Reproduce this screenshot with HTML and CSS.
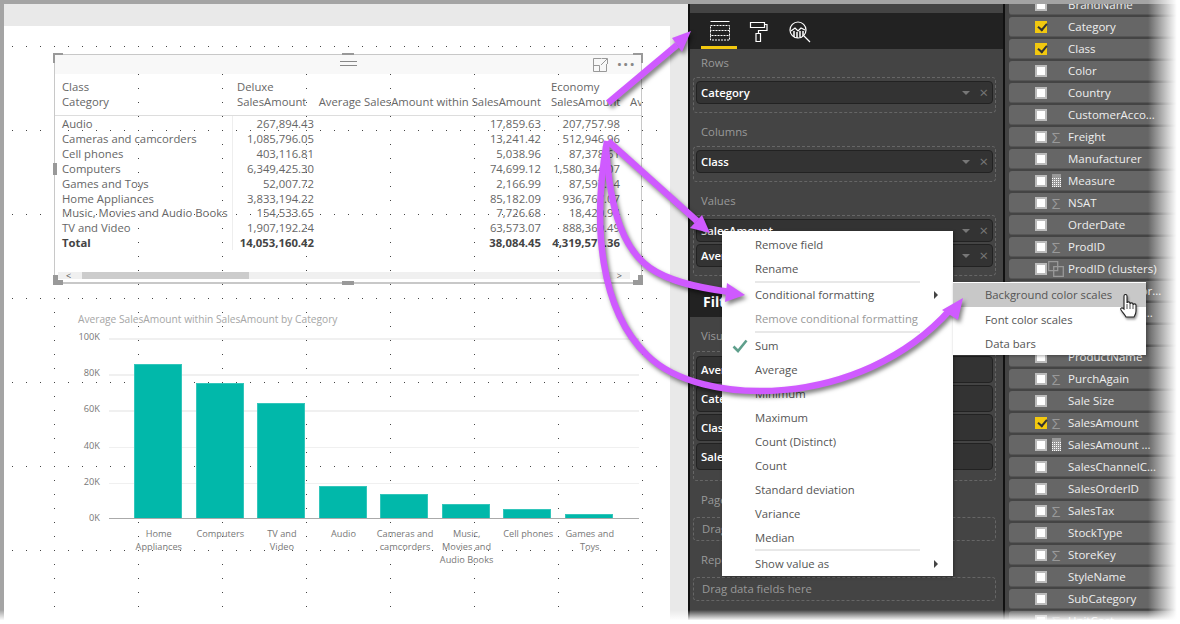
FILE: index.html
```html
<!DOCTYPE html>
<html lang="en">
<head>
    <meta charset="UTF-8">
    <title>Conditional formatting</title>
    <link rel="stylesheet" href="styles.css">
</head>
<body>
    <div class="frame">
        <div class="canvas">
            <div class="page">
                <div class="page-grid">
                    <div class="table-visual">
                        <span class="handle handle-tl"></span>
                        <span class="handle handle-tr"></span>
                        <span class="handle handle-bl"></span>
                        <span class="handle handle-br"></span>
                        <span class="handle handle-top"></span>
                        <span class="handle handle-left"></span>
                        <span class="handle handle-bottom"></span>
                        <div class="visual-header">
                            <span class="drag-lines"></span>
                            <svg class="focus-icon" width="15" height="14" viewBox="0 0 15 14">
                                <path d="M8.5 .5H.5v13h13V6M.5 7.5h6v6M9 .5h5.5V6M14 1 8 7" fill="none" stroke="#999"/>
                            </svg>
                            <span class="more-dots">&middot;&middot;&middot;</span>
                        </div>
                        <div class="table-clip">
                            <table class="matrix">
                                <thead>
                                    <tr>
                                        <th class="col-name">Class<br>Category</th>
                                        <th class="col-deluxe">Deluxe<br>SalesAmount</th>
                                        <th class="col-avg">Average SalesAmount within SalesAmount</th>
                                        <th class="col-economy">Economy<br>SalesAmount</th>
                                        <th class="col-next">Average</th>
                                    </tr>
                                </thead>
                                <tbody>
                                    <tr><td>Audio</td><td>267,894.43</td><td>17,859.63</td><td>207,757.98</td><td></td></tr>
                                    <tr><td>Cameras and camcorders</td><td>1,085,796.05</td><td>13,241.42</td><td>512,946.96</td><td></td></tr>
                                    <tr><td>Cell phones</td><td>403,116.81</td><td>5,038.96</td><td>87,378.61</td><td></td></tr>
                                    <tr><td>Computers</td><td>6,349,425.30</td><td>74,699.12</td><td>1,580,344.07</td><td></td></tr>
                                    <tr><td>Games and Toys</td><td>52,007.72</td><td>2,166.99</td><td>87,597.14</td><td></td></tr>
                                    <tr><td>Home Appliances</td><td>3,833,194.22</td><td>85,182.09</td><td>936,767.07</td><td></td></tr>
                                    <tr class="row-tight"><td>Music, Movies and Audio Books</td><td>154,533.65</td><td>7,726.68</td><td>18,420.94</td><td></td></tr>
                                    <tr><td>TV and Video</td><td>1,907,192.24</td><td>63,573.07</td><td>888,360.49</td><td></td></tr>
                                    <tr class="total"><td>Total</td><td>14,053,160.42</td><td>38,084.45</td><td>4,319,571.36</td><td></td></tr>
                                </tbody>
                            </table>
                        </div>
                        <div class="scrollbar">
                            <span class="scroll-arrow">&lt;</span>
                            <span class="scroll-thumb"></span>
                            <span class="scroll-arrow scroll-arrow-right">&gt;</span>
                        </div>
                    </div>

                    <div class="chart">
                        <div class="chart-title">Average SalesAmount within SalesAmount by Category</div>
                        <div class="chart-body">
                            <div class="y-axis">
                                <span>100K</span><span>80K</span><span>60K</span><span>40K</span><span>20K</span><span>0K</span>
                            </div>
                            <div class="plot">
                                <div class="bar" style="height: 154px"></div>
                                <div class="bar" style="height: 135px"></div>
                                <div class="bar" style="height: 115px"></div>
                                <div class="bar" style="height: 32px"></div>
                                <div class="bar" style="height: 24px"></div>
                                <div class="bar" style="height: 14px"></div>
                                <div class="bar" style="height: 9px"></div>
                                <div class="bar" style="height: 4px"></div>
                            </div>
                        </div>
                        <div class="x-axis">
                            <span>Home<br>Appliances</span>
                            <span>Computers</span>
                            <span>TV and<br>Video</span>
                            <span>Audio</span>
                            <span>Cameras and<br>camcorders</span>
                            <span>Music,<br>Movies and<br>Audio Books</span>
                            <span>Cell phones</span>
                            <span>Games and<br>Toys</span>
                        </div>
                    </div>
                </div>
            </div>
        </div>

        <div class="viz-panel">
            <div class="tab-bar">
                <div class="tab tab-active">
                    <svg width="22" height="20" viewBox="0 0 22 20" fill="none" stroke="#fff">
                        <path d="M1.5 .5h19"/>
                        <path d="M1.5 4.5h19v5h-19zM1.5 9.5v5h19v-5M1.5 14.5v4.5h19v-4.5" stroke-dasharray="2 1"/>
                    </svg>
                </div>
                <div class="tab">
                    <svg width="20" height="21" viewBox="0 0 20 21" fill="none" stroke="#fff" stroke-width="1.2">
                        <path d="M1.5 1.5h14v5h-14zM15.500 3.500h2.500v6H9.500v3M7 12.500h4.500v8H7z"/>
                    </svg>
                </div>
                <div class="tab">
                    <svg width="22" height="22" viewBox="0 0 22 22" fill="none" stroke="#fff" stroke-width="1.2">
                        <circle cx="9" cy="9" r="8"/>
                        <path d="M15 15l6 6M2 10l4-3 3 3 3-3 4 2"/>
                        <path d="M5 10v6M8 11v6M11 10v6M14 10v5" stroke-width="1.500"/>
                    </svg>
                </div>
            </div>

            <div class="well-label">Rows</div>
            <div class="well">
                <div class="pill">Category<span class="pill-caret"></span><span class="pill-close">&times;</span></div>
            </div>

            <div class="well-label">Columns</div>
            <div class="well">
                <div class="pill">Class<span class="pill-caret"></span><span class="pill-close">&times;</span></div>
            </div>

            <div class="well-label">Values</div>
            <div class="well">
                <div class="pill">SalesAmount<span class="pill-caret"></span><span class="pill-close">&times;</span></div>
                <div class="pill">Average SalesAmount<span class="pill-caret"></span><span class="pill-close">&times;</span></div>
            </div>

            <div class="filters-header">Filters</div>

            <div class="well-label well-label-tight">Visual level filters</div>
            <div class="well well-filters">
                <div class="pill pill-tall">Average SalesAmount</div>
                <div class="pill pill-tall">Category</div>
                <div class="pill pill-tall">Class</div>
                <div class="pill pill-tall">SalesAmount</div>
            </div>

            <div class="well-label">Page level filters</div>
            <div class="well well-empty">Drag data fields here</div>

            <div class="well-label">Report level filters</div>
            <div class="well well-empty">Drag data fields here</div>
        </div>

        <div class="fields-panel">
            <div class="field"><span class="check"></span><span class="field-icon"></span><span class="field-name">BrandName</span></div>
            <div class="field"><span class="check checked"></span><span class="field-icon"></span><span class="field-name">Category</span></div>
            <div class="field"><span class="check checked"></span><span class="field-icon"></span><span class="field-name">Class</span></div>
            <div class="field"><span class="check"></span><span class="field-icon"></span><span class="field-name">Color</span></div>
            <div class="field"><span class="check"></span><span class="field-icon"></span><span class="field-name">Country</span></div>
            <div class="field"><span class="check"></span><span class="field-icon"></span><span class="field-name">CustomerAcco...</span></div>
            <div class="field"><span class="check"></span><span class="field-icon sigma">&Sigma;</span><span class="field-name">Freight</span></div>
            <div class="field"><span class="check"></span><span class="field-icon"></span><span class="field-name">Manufacturer</span></div>
            <div class="field"><span class="check"></span><span class="field-icon"><span class="calc"></span></span><span class="field-name">Measure</span></div>
            <div class="field"><span class="check"></span><span class="field-icon sigma">&Sigma;</span><span class="field-name">NSAT</span></div>
            <div class="field"><span class="check"></span><span class="field-icon"></span><span class="field-name">OrderDate</span></div>
            <div class="field"><span class="check"></span><span class="field-icon sigma">&Sigma;</span><span class="field-name">ProdID</span></div>
            <div class="field"><span class="check"></span><span class="field-icon">
                <svg width="16" height="16" viewBox="0 0 16 16" fill="none" stroke="#999" stroke-width="1.300"><path d="M.7 .7h9v9h-9zM5.700 5.700h9.600v9.600H5.700z"/></svg>
            </span><span class="field-name">ProdID (clusters)</span></div>
            <div class="field"><span class="check"></span><span class="field-icon"></span><span class="field-name">ProductCategor...</span></div>
            <div class="field"><span class="check"></span><span class="field-icon sigma">&Sigma;</span><span class="field-name">ProductDescri...</span></div>
            <div class="field"><span class="check"></span><span class="field-icon"></span><span class="field-name">ProductKey</span></div>
            <div class="field"><span class="check"></span><span class="field-icon"></span><span class="field-name">ProductName</span></div>
            <div class="field"><span class="check"></span><span class="field-icon sigma">&Sigma;</span><span class="field-name">PurchAgain</span></div>
            <div class="field"><span class="check"></span><span class="field-icon"></span><span class="field-name">Sale Size</span></div>
            <div class="field"><span class="check checked"></span><span class="field-icon sigma">&Sigma;</span><span class="field-name">SalesAmount</span></div>
            <div class="field"><span class="check"></span><span class="field-icon"><span class="calc"></span></span><span class="field-name">SalesAmount ...</span></div>
            <div class="field"><span class="check"></span><span class="field-icon"></span><span class="field-name">SalesChannelC...</span></div>
            <div class="field"><span class="check"></span><span class="field-icon"></span><span class="field-name">SalesOrderID</span></div>
            <div class="field"><span class="check"></span><span class="field-icon sigma">&Sigma;</span><span class="field-name">SalesTax</span></div>
            <div class="field"><span class="check"></span><span class="field-icon"></span><span class="field-name">StockType</span></div>
            <div class="field"><span class="check"></span><span class="field-icon sigma">&Sigma;</span><span class="field-name">StoreKey</span></div>
            <div class="field"><span class="check"></span><span class="field-icon"></span><span class="field-name">StyleName</span></div>
            <div class="field"><span class="check"></span><span class="field-icon"></span><span class="field-name">SubCategory</span></div>
            <div class="field"><span class="check"></span><span class="field-icon sigma">&Sigma;</span><span class="field-name">UnitCost</span></div>
        </div>
    </div>

    <!-- context menu -->
    <div class="menu">
        <div class="menu-item">Remove field</div>
        <div class="menu-item">Rename</div>
        <div class="menu-sep"></div>
        <div class="menu-item">Conditional formatting<span class="menu-more"></span></div>
        <div class="menu-item menu-item-off">Remove conditional formatting</div>
        <div class="menu-sep menu-sep-gap"></div>
        <div class="menu-item menu-item-checked">
            <svg class="menu-check" width="16" height="14" viewBox="0 0 16 14"><path d="M1.500 7.500 6 12 14.500 1.500" fill="none" stroke="#5f9f8c" stroke-width="2.600"/></svg>Sum
        </div>
        <div class="menu-item">Average</div>
        <div class="menu-item">Minimum</div>
        <div class="menu-item">Maximum</div>
        <div class="menu-item">Count (Distinct)</div>
        <div class="menu-item">Count</div>
        <div class="menu-item">Standard deviation</div>
        <div class="menu-item">Variance</div>
        <div class="menu-item">Median</div>
        <div class="menu-sep menu-sep-last"></div>
        <div class="menu-item">Show value as<span class="menu-more"></span></div>
    </div>

    <div class="submenu">
        <div class="menu-item menu-item-hover">Background color scales</div>
        <div class="menu-item">Font color scales</div>
        <div class="menu-item">Data bars</div>
    </div>

    <!-- callout arrows drawn over the screenshot -->
    <svg class="arrows" width="1180" height="624" viewBox="0 0 1180 624">
        <g fill="none" stroke="#cf5aff" stroke-width="6.500">
            <path d="M608 103 677 45"/>
            <path d="M608 141 697 221"/>
            <path d="M606 146C610 215 625 250 650 268 670 282 700 288 730 292"/>
            <path d="M607 141C592 225 600 310 647 355 700 408 860 410 950 310"/>
        </g>
        <g fill="#cf5aff">
            <path d="M691 31 672 38 682 52z"/>
            <path d="M710 233 690 228 702 215z"/>
            <path d="M745 295 727 283 725 302z"/>
            <path d="M963 298 942 310 958 320z"/>
        </g>
    </svg>

    <svg class="hand" width="22" height="28" viewBox="0 0 22 28">
        <path d="M6 2c0-2 3-2 3 0v7c0-1.500 3-1.500 3 0v1c0-1.500 3-1.500 3 0v1c0-1.500 3-1.500 3 0v6c0 3-1 4-2 6H8c-1-2-3-4-5-7-1-2 1-3 3-1z" fill="#fff" stroke="#222" stroke-width="1.100"/>
        <path d="M9 10v5M12 10v5M15 11v4" stroke="#222" fill="none" stroke-width=".8"/>
    </svg>

    <div class="fade fade-right"></div>
    <div class="fade fade-bottom"></div>
</body>
</html>
```
FILE: styles.css
```css
* {
    box-sizing: border-box;
}

body {
    margin: 0;
    width: 1180px;
    height: 624px;
    position: relative;
    overflow: hidden;
    background-color: #fff;
    font-family: "Open Sans", sans-serif;
    font-size: 11.3px;
    color: #666;
}

.frame {
    display: flex;
    height: 620px;
    border-top: 4px solid #a4a4a4;
    border-left: 4px solid #a4a4a4;
    overflow: hidden;
}

/* report canvas */
.canvas {
    width: 684px;
    flex: none;
    background-color: #e9e9e9;
    padding: 22px 18px 0 0;
}

.page {
    height: 100%;
    background-color: #fff;
    padding-top: 20px;
}

.page-grid {
    height: 100%;
    padding: 8px 0 0 50px;
    background-image:
        conic-gradient(from 270deg at 1px 1px, #444 90deg, transparent 0),
        conic-gradient(from 270deg at 1px 1px, #444 90deg, transparent 0);
    background-size: 14px 84px, 84px 14px;
    background-position: 8px 0, 50px 0;
}

.table-visual {
    position: relative;
    width: 588px;
    height: 230px;
    border: 1px solid #c8c8c8;
    border-width: 1px 1px 2px 1px;
}

.visual-header {
    height: 19px;
    background-color: #f8f8f8;
    display: flex;
    align-items: center;
    justify-content: flex-end;
    padding-right: 5px;
    position: relative;
}

.drag-lines {
    position: absolute;
    left: 285px;
    top: 6px;
    width: 17px;
    height: 5px;
    border-top: 1px solid #888;
    border-bottom: 1px solid #888;
}

.focus-icon {
    margin-right: 9px;
}

.more-dots {
    color: #888;
    font-size: 17px;
    font-weight: 700;
    letter-spacing: 1.500px;
    line-height: 19px;
}

.handle {
    position: absolute;
    background-color: #999;
}

.handle-top,
.handle-bottom {
    left: 287px;
    width: 12px;
    height: 4px;
}

.handle-top {
    top: -2px;
}

.handle-bottom {
    bottom: -3px;
}

.handle-left {
    left: -2px;
    top: 108px;
    width: 4px;
    height: 12px;
}

.handle-tl,
.handle-tr,
.handle-bl,
.handle-br {
    width: 10px;
    height: 10px;
    background-color: transparent;
    border: 0 solid #999;
}

.handle-tl {
    left: -2px;
    top: -2px;
    border-width: 5px 0 0 5px;
}

.handle-tr {
    right: -2px;
    top: -2px;
    border-width: 5px 5px 0 0;
}

.handle-bl {
    left: -2px;
    bottom: -3px;
    border-width: 0 0 5px 5px;
}

.handle-br {
    right: -2px;
    bottom: -3px;
    border-width: 0 5px 5px 0;
}

.table-clip {
    height: 178px;
    overflow: hidden;
}

.matrix {
    border-collapse: collapse;
    table-layout: fixed;
    width: 600px;
    line-height: 15px;
}

.matrix th {
    font-weight: 400;
    text-align: left;
    vertical-align: bottom;
    padding: 5px 0 6px 0;
    border-bottom: 1px solid #ddd;
    white-space: nowrap;
    overflow: hidden;
}

.matrix td {
    text-align: right;
    padding: 0 4px 0 0;
    height: 15px;
    white-space: nowrap;
}

.matrix td:first-child {
    text-align: left;
    padding-left: 7px;
    border-right: 1px solid #eee;
}

.matrix .row-tight td {
    height: 14px;
    line-height: 14px;
}

.col-name {
    width: 177px;
    padding-left: 7px !important;
}

.col-deluxe {
    width: 86px;
    padding-left: 5px !important;
}

.col-avg {
    width: 227px;
    text-align: right !important;
    padding-right: 4px !important;
}

.col-economy {
    width: 79px;
    padding-left: 6px !important;
}

.col-next {
    width: 31px;
    padding-left: 6px !important;
}

.total td {
    font-weight: 700;
    color: #444;
}

.scrollbar {
    margin: 20px 0 0 3px;
    width: 572px;
    height: 7px;
    background-color: #f0f0f0;
    display: flex;
    align-items: center;
    font-size: 9px;
    color: #555;
    padding-left: 8px;
}

.scroll-thumb {
    width: 167px;
    height: 7px;
    background-color: #ccc;
    margin-left: 11px;
}

.scroll-arrow-right {
    margin-left: auto;
    margin-right: 8px;
}

/* bar chart */
.chart {
    padding-top: 28px;
    font-size: 9.2px;
    color: #777;
}

.chart-title {
    margin-left: 24px;
    height: 14px;
    line-height: 14px;
    color: #a6a6a6;
    font-size: 10.2px;
}

.chart-body {
    display: flex;
    margin-top: 12px;
}

.y-axis {
    width: 46px;
    height: 195px;
    margin-top: -8px;
    margin-right: 9px;
    display: flex;
    flex-direction: column;
    justify-content: space-between;
    align-items: flex-end;
    line-height: 14px;
}

.plot {
    width: 530px;
    height: 181px;
    display: flex;
    align-items: flex-end;
    gap: 13.570px;
    padding-left: 25px;
    border-bottom: 1px solid #aaa;
    background-image: repeating-linear-gradient(#f0f0f0 0 1.500px, transparent 1.500px 36.200px);
}

.bar {
    width: 48px;
    background-color: #01b8aa;
    border: 1px solid #33c6bb;
    border-bottom: none;
}

.x-axis {
    display: flex;
    margin: 2px 0 0 74px;
    line-height: 13px;
    text-align: center;
}

.x-axis span {
    width: 61.570px;
    flex: none;
}

/* visualizations pane */
.viz-panel {
    width: 317px;
    flex: none;
    background-color: #444;
    border-left: 2px solid #111;
    border-right: 2px solid #111;
    padding-top: 9px;
}

.tab-bar {
    height: 36px;
    background-color: #222;
    display: flex;
    padding-left: 11px;
    margin-bottom: 6px;
}

.tab {
    width: 36px;
    height: 36px;
    margin-right: 4px;
    padding: 8px 0 0 8px;
}

.tab-active {
    border-bottom: 3px solid #f2c80f;
}

.well-label {
    height: 16px;
    line-height: 16px;
    margin: 0 0 6px 11px;
    color: #999;
}

.well-label-tight {
    margin-top: 11px;
    margin-bottom: 7px;
}

.well {
    margin: 0 7px 11px 3px;
    padding: 3px 2px 8px;
    border: 1px dashed #666;
    border-radius: 4px;
}

.pill {
    height: 23px;
    line-height: 21px;
    background-color: #333;
    border: 1px solid #222;
    border-radius: 4px;
    color: #fff;
    font-weight: 600;
    padding-left: 4px;
    position: relative;
    margin-bottom: 2px;
}

.pill:last-child {
    margin-bottom: 0;
}

.pill-tall {
    height: 27px;
    line-height: 25px;
}

.pill-caret {
    position: absolute;
    right: 22px;
    top: 9px;
    border: 4px solid transparent;
    border-top-color: #777;
    border-bottom: none;
}

.pill-close {
    position: absolute;
    right: 4px;
    top: 0;
    color: #777;
    font-size: 15px;
    font-weight: 400;
}

.filters-header {
    height: 30px;
    line-height: 30px;
    background-color: #222;
    color: #fff;
    font-size: 14px;
    font-weight: 700;
    padding-left: 13px;
}

.well-filters {
    height: 130px;
    padding-top: 4px;
}

.well-empty {
    height: 24px;
    line-height: 22px;
    padding: 0 0 0 8px;
    color: #999;
    margin-bottom: 11px;
}

.viz-panel .well-label + .well-empty {
    margin-top: 9px;
}

/* fields pane */
.fields-panel {
    flex: 1;
    background-color: #444;
    padding: 0 0 0 4px;
    overflow: hidden;
    min-width: 0;
}

.field {
    height: 20px;
    margin-bottom: 2px;
    background-color: #666;
    border-bottom: 1px solid #555;
    border-radius: 3px 0 0 3px;
    display: flex;
    align-items: center;
    padding-left: 26px;
    color: #eee;
    font-size: 11.5px;
    white-space: nowrap;
}

.field:first-child {
    margin-top: -9px;
}

.check {
    width: 12px;
    height: 12px;
    flex: none;
    background-color: #fff;
    border: 2px solid #bbb;
    position: relative;
}

.check.checked {
    background-color: #f2c80f;
    border-color: #f2c80f;
}

.check.checked::after {
    content: "";
    position: absolute;
    left: 1px;
    top: 0;
    width: 7px;
    height: 4px;
    border-left: 2px solid #333;
    border-bottom: 2px solid #333;
    transform: rotate(-50deg);
}

.field-icon {
    width: 21px;
    flex: none;
    display: flex;
    justify-content: center;
    align-items: center;
    padding-right: 3px;
}

.sigma {
    color: #999;
    font-size: 15px;
    line-height: 14px;
}

.calc {
    width: 9px;
    height: 13px;
    background-image:
        linear-gradient(#999 4px, transparent 4px),
        conic-gradient(from 270deg at 1px 1px, #fff 90deg, #999 0);
    background-size: 100% 100%, 2px 2px;
}

/* menus */
.menu,
.submenu {
    position: absolute;
    background-color: #fff;
    box-shadow: 1px 1px 3px rgba(0, 0, 0, 0.35);
    color: #555;
}

.menu {
    left: 722px;
    top: 231px;
    width: 231px;
    height: 345px;
    padding-top: 2px;
}

.submenu {
    left: 953px;
    top: 282px;
    width: 193px;
    height: 73px;
    padding-top: 1px;
}

.menu-item {
    height: 24px;
    line-height: 24px;
    padding-left: 33px;
    position: relative;
    white-space: nowrap;
}

.submenu .menu-item {
    padding-left: 32px;
}

.menu-item-off {
    color: #999;
}

.menu-item-hover {
    background-color: #c8c8c8;
    margin-bottom: 1px;
}

.menu-item-checked {
    padding-left: 10px;
    display: flex;
    align-items: center;
}

.menu-check {
    margin-right: 7px;
}

.menu-more {
    position: absolute;
    left: 212px;
    top: 8px;
    border: 4px solid transparent;
    border-left-color: #444;
    border-right: none;
}

.menu-sep {
    height: 2px;
    width: 165px;
    margin-left: 33px;
    background-color: #e8e8e8;
}

.menu-sep-gap {
    margin-bottom: 1px;
}

.menu-sep-last {
    margin-top: -1px;
    margin-bottom: 1px;
}

.arrows {
    position: absolute;
    left: 0;
    top: 0;
    filter: drop-shadow(2px 3px 2px rgba(0, 0, 0, 0.5));
    pointer-events: none;
}

.hand {
    position: absolute;
    left: 1118px;
    top: 294px;
    filter: drop-shadow(1px 2px 1px rgba(0, 0, 0, 0.4));
}

/* torn screenshot edge */
.fade {
    position: absolute;
}

.fade-right {
    right: 0;
    top: 0;
    bottom: 0;
    width: 32px;
    background-image: linear-gradient(to right, rgba(255, 255, 255, 0), #fff 90%);
}

.fade-bottom {
    left: 0;
    right: 0;
    bottom: 0;
    height: 14px;
    background-image: linear-gradient(rgba(255, 255, 255, 0), #fff 75%);
}
```
